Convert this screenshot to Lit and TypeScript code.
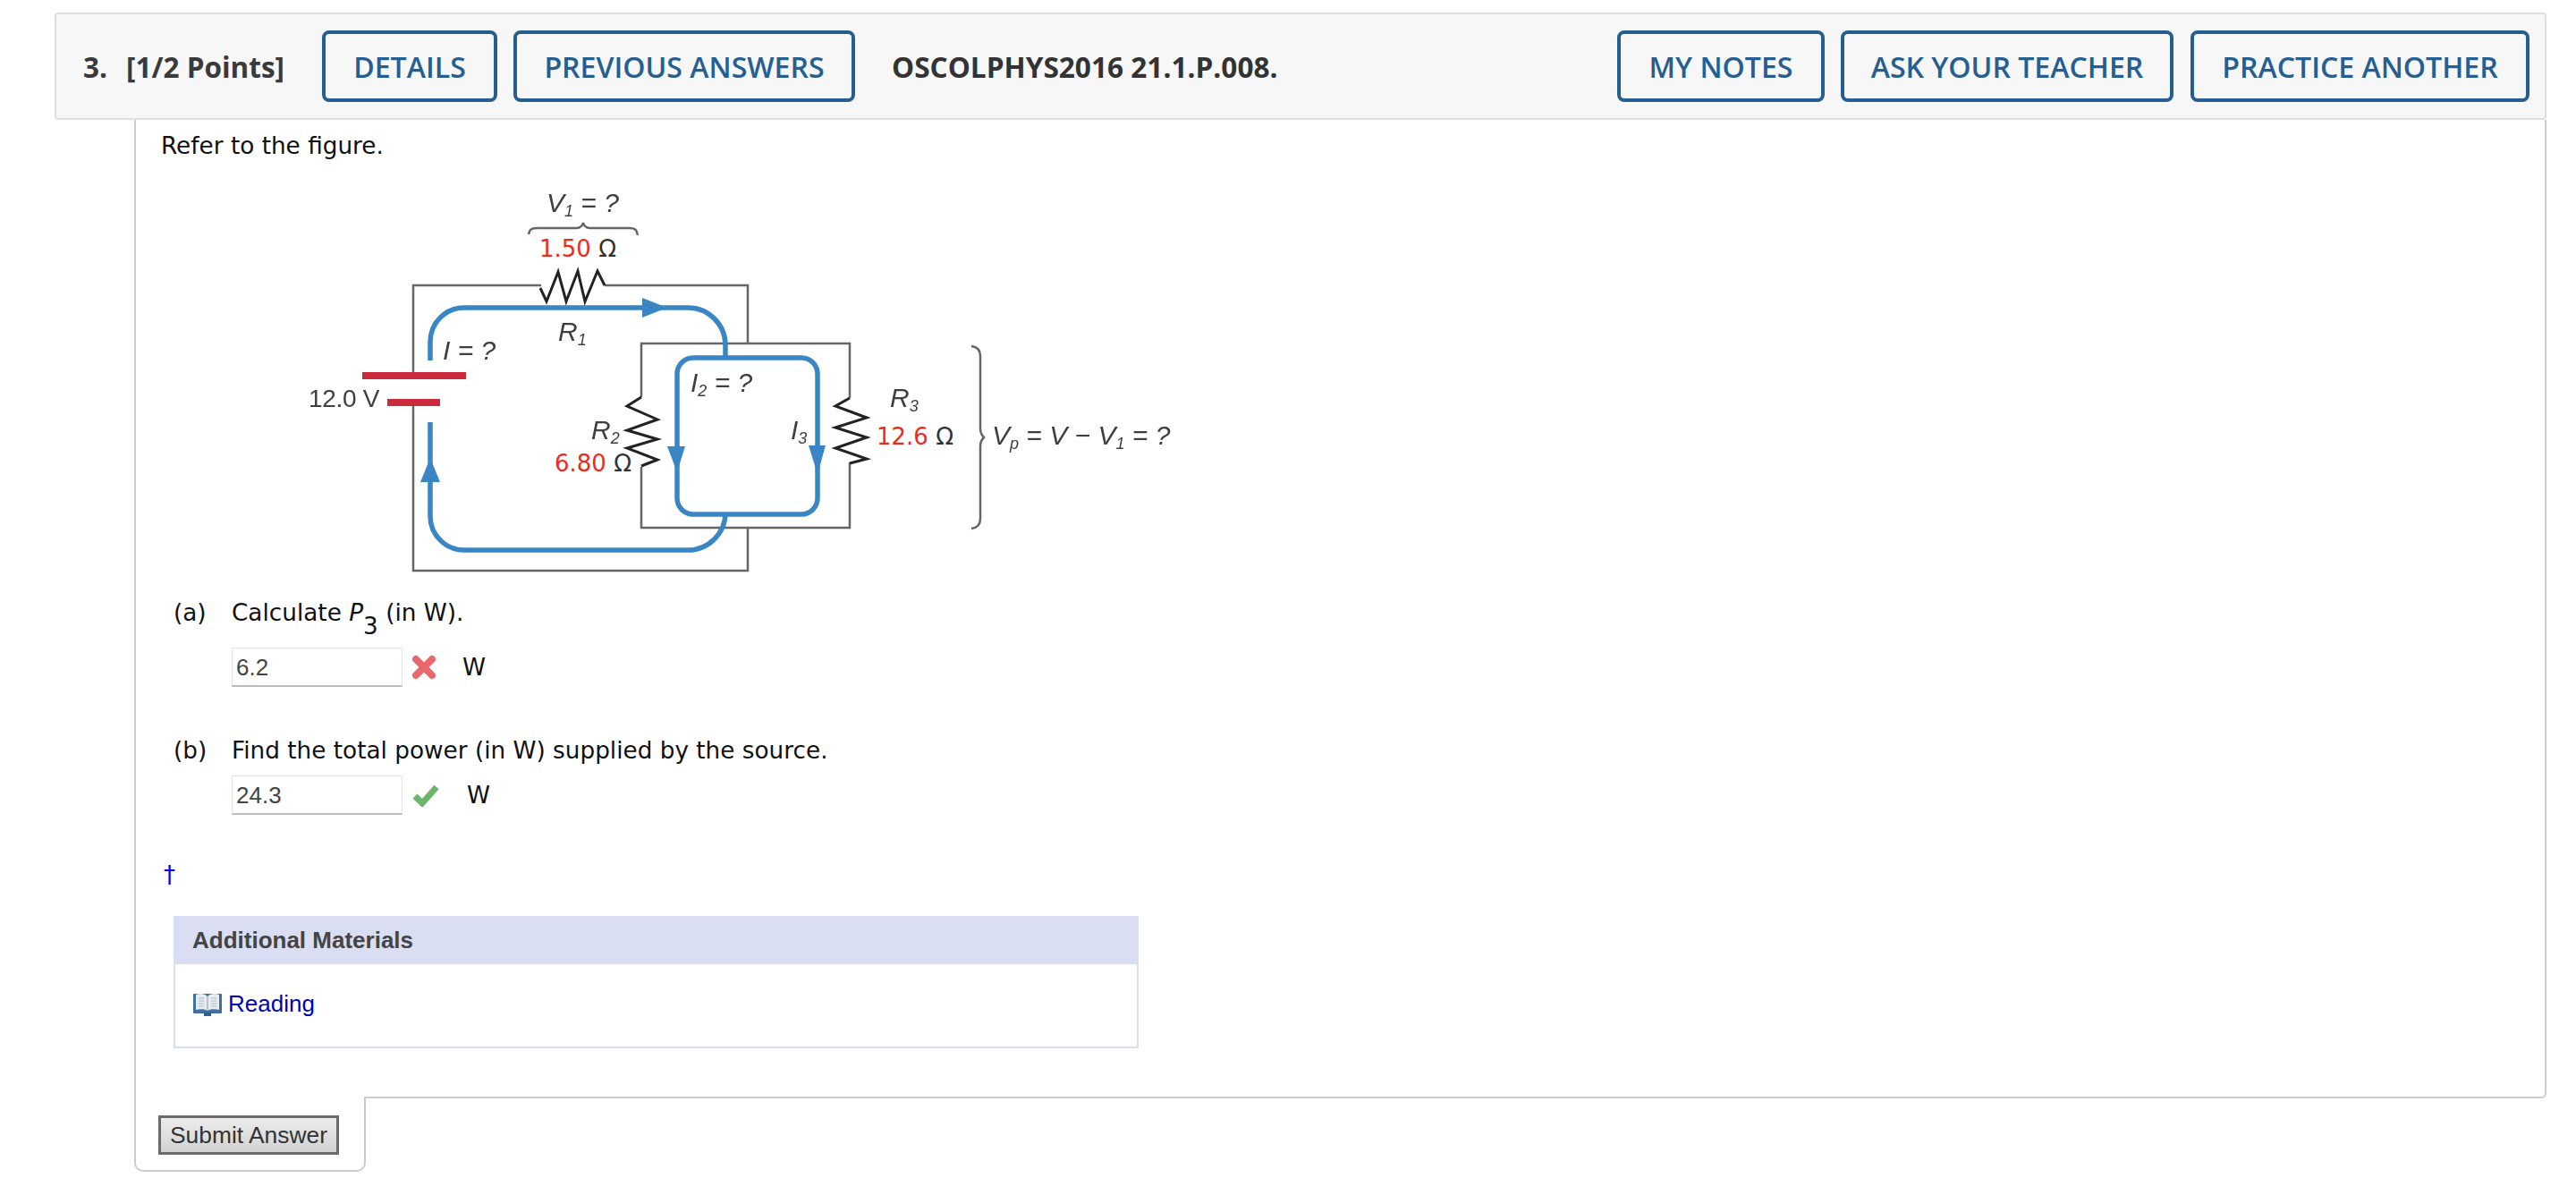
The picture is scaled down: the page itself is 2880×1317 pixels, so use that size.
import { LitElement, html, css, svg } from "lit";
import { customElement } from "lit/decorators.js";

const zig = (pts: number[][]) => pts.map((p) => p.join(",")).join(" ");

const figure = svg`
  <g class="wires">
    <path d="M463 419V318H606M677 318H837V383M718 443V383H951V444M951 516V589H718V521M837 589V637H463V449"/>
  </g>
  <g class="loop">
    <path d="M482 402V381A38 38 0 0 1 520 343H770A42 42 0 0 1 812 385V399"/>
    <path d="M776 399H897A18 18 0 0 1 915 417V556A18 18 0 0 1 897 574H776A18 18 0 0 1 758 556V417A18 18 0 0 1 776 399Z"/>
    <path d="M812 575V572A42 42 0 0 1 770 614H520A38 38 0 0 1 482 576V471"/>
  </g>
  <g class="head">
    <polygon points="719,332 719,354 747,343"/>
    <polygon points="747,498 767,498 758,527"/>
    <polygon points="905,497 924,497 915,529"/>
    <polygon points="482,511 471,538 493,538"/>
  </g>
  <g class="bat">
    <rect x="406" y="415" width="116" height="8"/>
    <rect x="434" y="445" width="59" height="8"/>
  </g>
  <g class="res">
    <polyline points=${zig([[605,321],[612,336],[625,303],[634,336],[647,302],[655,336],[669,302],[677,318]])}/>
    <polyline points=${zig([[718,443],[702,453],[736,468],[702,480],[736,490],[702,500],[736,513],[718,520]])}/>
    <polyline points=${zig([[951,444],[935,453],[970,466],[935,477],[970,488],[935,500],[970,512],[951,517]])}/>
  </g>
  <g class="brace">
    <path d="M592 261C593 255 596 254 602 254H645C650 254 652 252 653 248C654 252 656 254 661 254H705C711 254 713 256 714 262"/>
    <path d="M1087 386C1094 387 1097 391 1097 397V478C1097 483 1099 486 1101 488C1099 490 1097 493 1097 498V579C1097 585 1094 589 1087 590"/>
  </g>
  <g class="lab">
    <text x="612" y="236" class="i">V<tspan class="s" dy="5">1</tspan><tspan dy="-5"> = ?</tspan></text>
    <text x="625" y="380" class="i">R<tspan class="s" dy="5">1</tspan></text>
    <text x="496" y="401" class="i">I = ?</text>
    <text x="346" y="454" class="n">12.0 V</text>
    <text x="662" y="490" class="i">R<tspan class="s" dy="5">2</tspan></text>
    <text x="773" y="437" class="i">I<tspan class="s" dy="5">2</tspan><tspan dy="-5"> = ?</tspan></text>
    <text x="885" y="490" class="i">I<tspan class="s" dy="5">3</tspan></text>
    <text x="996" y="454" class="i">R<tspan class="s" dy="5">3</tspan></text>
    <text x="1110" y="496" class="i">V<tspan class="s" dy="5">p</tspan><tspan dy="-5"> = V − V</tspan><tspan class="s" dy="5">1</tspan><tspan dy="-5"> = ?</tspan></text>
  </g>
  <g class="val">
    <text x="604" y="286"><tspan class="r">1.50</tspan> Ω</text>
    <text x="621" y="526"><tspan class="r">6.80</tspan> Ω</text>
    <text x="981" y="496"><tspan class="r">12.6</tspan> Ω</text>
  </g>
`;

@customElement("app-root")
export class AppRoot extends LitElement {
  static styles = css`
    :host { display: block; padding: 14px 33px 0 61px; background: #fff; font-family: "DejaVu Sans", sans-serif; font-size: 26.3px; color: #111; }
    * { box-sizing: border-box; }

    .head-bar { height: 120px; display: flex; align-items: center; background: #f7f7f7; border: 2px solid #dfdfdf; border-radius: 4px; padding: 0 17px 0 30px; font-family: "Open Sans", sans-serif; font-weight: 700; color: #3a3a3a; font-size: 31.5px; }
    .num { width: 48px; }
    .points { width: 219px; }
    .btn { height: 80px; display: flex; align-items: center; justify-content: center; border: 4px solid #255f92; border-radius: 8px; color: #255f92; font-weight: 600; font-size: 32.1px; background: transparent; }
    .w-det { width: 196px; margin-right: 18px; }
    .w-prev { width: 382px; margin-right: 40px; }
    .code { flex: 1; font-weight: 700; font-size: 31.6px; color: #333; padding-left: 1px; }
    .w-notes { width: 232px; margin-right: 18px; }
    .w-ask { width: 372px; margin-right: 19px; }
    .w-prac { width: 379px; }

    .content { margin-left: 89px; height: 1094px; border: 2px solid #ccc; border-top: 0; border-bottom-right-radius: 6px; padding: 12px 0 0 27px; }
    .line { height: 34px; line-height: 34px; white-space: nowrap; }
    .fig { display: block; width: 1000px; height: 460px; margin: 11px 0 0 150px; }
    .intro { padding-left: 1px; }
    .wires path { fill: none; stroke: #666; stroke-width: 2.5; }
    .loop path { fill: none; stroke: #3a86c4; stroke-width: 5.5; }
    .head polygon { fill: #3a86c4; }
    .bat rect { fill: #c92a3c; }
    .res polyline { fill: none; stroke: #222; stroke-width: 3; stroke-linejoin: miter; }
    .brace path { fill: none; stroke: #666; stroke-width: 2.5; }
    .wires, .loop, .head, .bat, .res, .brace, .lab { filter: blur(0.6px); }
    .lab text { font-family: "Liberation Sans", sans-serif; font-size: 30px; fill: #3f3f3f; }
    .lab .n { font-size: 28px; letter-spacing: -0.3px; }
    .lab .i { font-style: italic; }
    .lab .s { font-size: 18px; }
    .val text { font-family: "DejaVu Sans", sans-serif; font-size: 26px; fill: #333; }
    .val .r { fill: #ee2a1c; }

    .part { margin: 17px 0 0 15px; display: flex; }
    .part.second { margin-top: 54px; }
    .tag { width: 65px; }
    .sub { display: inline-block; height: 0; line-height: 0; vertical-align: -15px; }
    .ans { display: flex; align-items: center; margin: 22px 0 0 80px; height: 44px; }
    .ans.b { margin-top: 11px; }
    .field { width: 191px; height: 44px; border: 1px solid #e4e4e4; border-bottom: 2px solid #bbb; font-family: "Liberation Sans", sans-serif; font-size: 26px; color: #444; line-height: 42px; padding-left: 4px; }
    .mark { display: block; margin-left: 10px; filter: blur(0.5px); }
    .unit { margin-left: 29px; }
    .ans.b .unit { margin-left: 30px; }
    .dag { color: #0000e6; margin: 50px 0 0 0; height: 34px; line-height: 34px; padding-left: 4px; font-size: 26px; }
    .mat { width: 1079px; height: 148px; margin: 29px 0 0 15px; border: 2px solid #d9def3; border-top: 0; font-family: "Liberation Sans", sans-serif; font-size: 26px; }
    .mat-h { height: 54px; margin: 0 -2px; background: #d9def3; font-weight: 700; color: #444; line-height: 54px; padding-left: 21px; }
    .mat-b { display: flex; align-items: center; gap: 7px; padding: 29px 0 0 20px; color: #0000c0; }
    .foot { margin: -2px 0 0 89px; width: 259px; height: 84px; background: #fff; border: 2px solid #ccc; border-top: 0; border-bottom-left-radius: 10px; border-bottom-right-radius: 10px; padding: 21px 0 0 25px; position: relative; }
    .foot::after { content: ""; position: absolute; right: -2px; top: 0; width: 2px; height: 2px; background: #ccc; }
    .submit { width: 202px; height: 44px; border: 3px solid #6a6a6a; background: linear-gradient(#ececec, #d2d2d2); font-family: "Liberation Sans", sans-serif; font-size: 26.4px; color: #333; padding: 0; }
  `;

  render() {
    return html`
      <div class="head-bar">
        <span class="num">3.</span>
        <span class="points">[1/2 Points]</span>
        <span class="btn w-det">DETAILS</span>
        <span class="btn w-prev">PREVIOUS ANSWERS</span>
        <span class="code">OSCOLPHYS2016 21.1.P.008.</span>
        <span class="btn w-notes">MY NOTES</span>
        <span class="btn w-ask">ASK YOUR TEACHER</span>
        <span class="btn w-prac">PRACTICE ANOTHER</span>
      </div>
      <div class="content">
        <div class="line intro">Refer to the figure.</div>
        <svg class="fig" viewBox="330 190 1000 460">${figure}</svg>
        <div class="part line"><span class="tag">(a)</span><span>Calculate <i>P</i><span class="sub">3</span> (in W).</span></div>
        <div class="ans">
          <div class="field">6.2</div>
          <svg class="mark" width="28" height="28" viewBox="0 0 28 28"><path d="M5 5L23 23M23 5L5 23" fill="none" stroke="#e9686b" stroke-width="8" stroke-linecap="round"/></svg>
          <span class="unit">W</span>
        </div>
        <div class="part line second"><span class="tag">(b)</span><span>Find the total power (in W) supplied by the source.</span></div>
        <div class="ans b">
          <div class="field">24.3</div>
          <svg class="mark" width="32" height="26" viewBox="0 0 32 26"><path d="M4 14L12 22L28 4" fill="none" stroke="#6db56d" stroke-width="7"/></svg>
          <span class="unit">W</span>
        </div>
        <div class="dag">†</div>
        <div class="mat">
          <div class="mat-h">Additional Materials</div>
          <div class="mat-b">
            <svg width="32" height="28" viewBox="0 0 32 28">
              <rect x="0" y="2" width="32" height="22" rx="1" fill="#3f6f9f"/>
              <rect x="12" y="23" width="8" height="4" fill="#2f5f8f"/>
              <path d="M3 3C8 1 13 2 16 5C19 2 24 1 29 3V20C24 19 19 19 16 21C13 19 8 19 3 20Z" fill="#e6edf2"/>
              <path d="M15 5H17V21H15Z" fill="#b9c2c9"/>
              <path d="M6 7H12M6 10H12M6 13H12M6 16H12M20 7H26M20 10H26M20 13H26M20 16H26" stroke="#c4ccd2" stroke-width="1.5"/>
            </svg>
            <span>Reading</span>
          </div>
        </div>
      </div>
      <div class="foot"><button class="submit">Submit Answer</button></div>
    `;
  }
}
